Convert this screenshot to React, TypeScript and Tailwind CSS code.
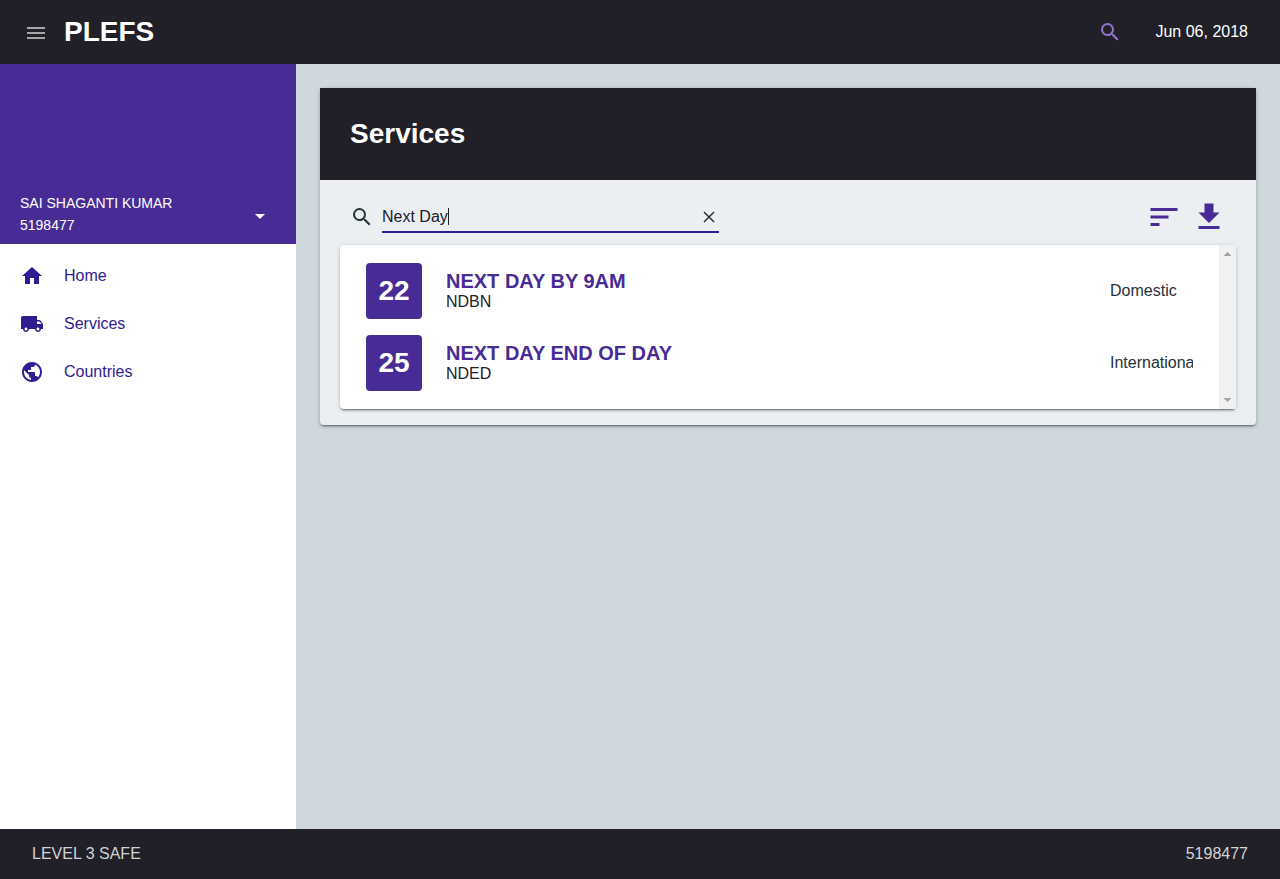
import { useState } from "react";
import type { ReactNode } from "react";
import {
  MdArrowDropDown,
  MdGetApp,
  MdHome,
  MdLocalShipping,
  MdMenu,
  MdPublic,
  MdSearch,
  MdSort,
} from "react-icons/md";

type Service = { code: number; name: string; abbr: string; scope: string };

const services: Service[] = [
  { code: 22, name: "NEXT DAY BY 9AM", abbr: "NDBN", scope: "Domestic" },
  { code: 25, name: "NEXT DAY END OF DAY", abbr: "NDED", scope: "International" },
];

function Header() {
  return (
    <header className="flex h-16 shrink-0 items-center bg-[#212029] pr-8 pl-6 text-white">
      <button type="button" aria-label="Toggle menu" className="mt-0.5 text-[#a6a6a9]">
        <MdMenu size={24} />
      </button>
      <h1 className="ml-4 text-[28px] leading-8 font-bold">PLEFS</h1>
      <button type="button" aria-label="Search" className="ml-auto text-[#9575cd]">
        <MdSearch size={24} />
      </button>
      <time dateTime="2018-06-06" className="ml-[33px] text-base">
        Jun 06, 2018
      </time>
    </header>
  );
}

function NavLink({ icon, label }: { icon: ReactNode; label: string }) {
  return (
    <li>
      <a href="#" className="flex h-12 items-center gap-5 px-5 text-base text-[#311b92]">
        {icon}
        {label}
      </a>
    </li>
  );
}

function Sidebar() {
  return (
    <aside className="w-[296px] shrink-0 bg-white">
      <div className="flex h-[180px] items-end justify-between bg-[#482b94] px-5 pb-2 text-white">
        <p className="text-sm leading-[22px] font-medium">
          SAI SHAGANTI KUMAR
          <br />
          5198477
        </p>
        <button type="button" aria-label="Account options" className="mr-1 mb-2">
          <MdArrowDropDown size={24} />
        </button>
      </div>
      <nav>
        <ul className="py-2">
          <NavLink icon={<MdHome size={24} />} label="Home" />
          <NavLink icon={<MdLocalShipping size={24} />} label="Services" />
          <NavLink icon={<MdPublic size={24} />} label="Countries" />
        </ul>
      </nav>
    </aside>
  );
}

function SearchField() {
  const [query, setQuery] = useState("Next Day");
  return (
    <div className="flex w-[369px] items-center">
      <label htmlFor="service-search" aria-label="Search services" className="mr-2 text-[#263238]">
        <MdSearch size={24} />
      </label>
      <div className="relative flex h-8 flex-1 items-center border-b-2 border-[#311b92] pt-0.5">
        <input
          id="service-search"
          type="text"
          value={query}
          onChange={(event) => setQuery(event.target.value)}
          className="peer h-full w-full min-w-0 bg-transparent text-base text-[#212029] outline-none"
        />
        {query === "Next Day" && (
          <span className="absolute top-[7px] left-[66px] h-[17px] w-px bg-[#212029] peer-focus:hidden" />
        )}
        <button
          type="button"
          aria-label="Clear search"
          onClick={() => setQuery("")}
          className="mr-1 text-[#263238]"
        >
          <svg width="12" height="12" viewBox="0 0 12 12" fill="none" stroke="currentColor" strokeWidth="1.5">
            <path d="M1 1l10 10M11 1L1 11" />
          </svg>
        </button>
      </div>
    </div>
  );
}

function ServiceRow({ service }: { service: Service }) {
  return (
    <li className="flex h-[72px] items-center px-[26px]">
      <span className="flex size-14 shrink-0 items-center justify-center rounded-sm bg-[#482b94] text-[28px] font-bold text-white">
        {service.code}
      </span>
      <div className="ml-6 flex-1 pt-0.5">
        <h3 className="text-xl leading-5 font-bold text-[#482b94]">{service.name}</h3>
        <p className="text-base leading-[22px] text-[#212029]">{service.abbr}</p>
      </div>
      <span className="w-[83px] overflow-hidden text-base whitespace-nowrap text-[#263238]">
        {service.scope}
      </span>
    </li>
  );
}

function ScrollTrack() {
  return (
    <div aria-hidden="true" className="flex w-[17px] shrink-0 flex-col items-center justify-between bg-[#f1f1f1] py-[7px] text-[#a3a3a3]">
      <svg width="7" height="4" viewBox="0 0 7 4" fill="currentColor" shapeRendering="crispEdges">
        <path d="M3 0h1v1h1v1h1v1h1v1H0V3h1V2h1V1h1z" />
      </svg>
      <svg width="7" height="4" viewBox="0 0 7 4" fill="currentColor" shapeRendering="crispEdges">
        <path d="M0 0h7v1H6v1H5v1H4v1H3V3H2V2H1V1H0z" />
      </svg>
    </div>
  );
}

function ServicesCard() {
  return (
    <section className="rounded-sm bg-[#eceff1] shadow-[0_1px_4px_rgba(38,50,56,0.3),0_2px_2px_-1px_rgba(20,50,30,0.6)]">
      <h2 className="flex h-[92px] items-center bg-[#212029] px-[30px] text-[28px] font-bold text-white">
        Services
      </h2>
      <div className="px-5 pb-4">
        <div className="flex h-[65px] items-center justify-between pt-2 pr-[9px] pl-2.5">
          <SearchField />
          <div className="flex gap-[9px] text-[#482b94]">
            <button type="button" aria-label="Sort">
              <MdSort size={36} />
            </button>
            <button type="button" aria-label="Download">
              <MdGetApp size={36} />
            </button>
          </div>
        </div>
        <div className="flex rounded-sm bg-white shadow-[0_1px_4px_rgba(0,0,0,0.2),0_2px_2px_-1px_rgba(0,0,0,0.5)]">
          <ul className="min-w-0 flex-1 py-2.5">
            {services.map((service) => (
              <ServiceRow key={service.code} service={service} />
            ))}
          </ul>
          <ScrollTrack />
        </div>
      </div>
    </section>
  );
}

export default function App() {
  return (
    <div className="flex min-h-screen flex-col font-['Liberation_Sans',Arial,sans-serif]">
      <Header />
      <div className="flex flex-1">
        <Sidebar />
        <main className="min-w-0 flex-1 bg-[#cfd8dc] p-6">
          <ServicesCard />
        </main>
      </div>
      <footer className="flex h-[50px] shrink-0 items-center justify-between bg-[#212029] px-8 text-base text-[#d3d3d4]">
        <span>LEVEL 3 SAFE</span>
        <span>5198477</span>
      </footer>
    </div>
  );
}
